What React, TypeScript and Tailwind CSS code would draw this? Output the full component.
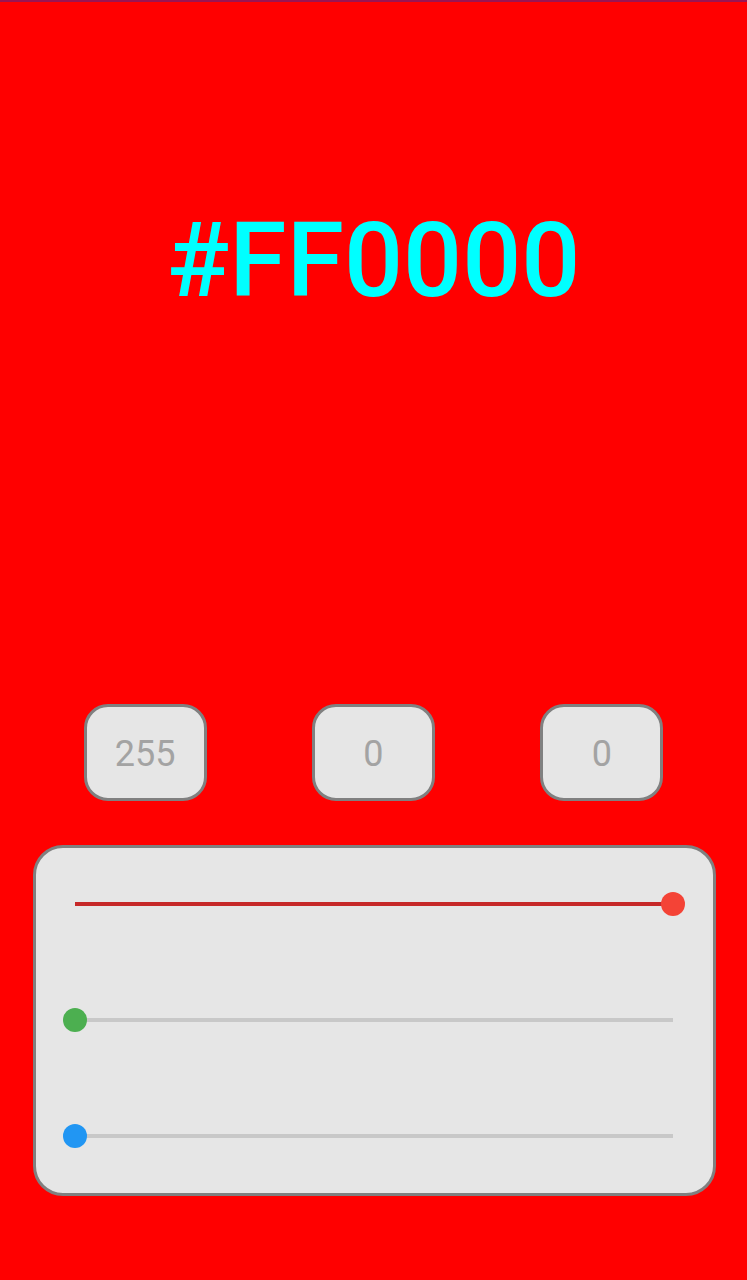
import React from 'react'

const channels = [
  { value: 255, track: 'bg-[#c62828]', thumb: 'bg-[#f44336]', pct: 100 },
  { value: 0, track: 'bg-[#c8c8c8]', thumb: 'bg-[#4caf50]', pct: 0 },
  { value: 0, track: 'bg-[#c8c8c8]', thumb: 'bg-[#2196f3]', pct: 0 },
]

function Slider({ track, thumb, pct }: { track: string; thumb: string; pct: number }) {
  return (
    <div className="relative h-6 flex items-center">
      <div className={`w-full h-[4px] ${pct > 0 ? track : 'bg-[#c8c8c8]'}`} />
      <div
        className={`absolute top-0 w-6 h-6 -ml-3 rounded-full ${thumb}`}
        style={{ left: `${pct}%` }}
      />
    </div>
  )
}

export default function App() {
  return (
    <div
      className="w-[747px] h-[1280px] bg-[#ff0000] flex flex-col overflow-hidden"
      style={{ fontFamily: 'Roboto, "Noto Sans", sans-serif' }}
    >
      {/* status bar edge */}
      <div className="h-[2px] bg-[#9b1552]" />

      {/* hex readout */}
      <h1 className="mt-[207px] text-center text-[104px] leading-none font-medium text-[#00ffff]">
        #FF0000
      </h1>

      {/* value boxes */}
      <div className="mt-[391px] mx-[31px] grid grid-cols-3">
        {channels.map((c, i) => (
          <div key={i} className="flex justify-center">
            <div className="w-[123px] h-[97px] rounded-[24px] border-[3px] border-[#808080] bg-[#e6e6e6] flex items-center justify-center pt-[3px]">
              <span className="text-[36px] text-[#a3a3a3]">{c.value}</span>
            </div>
          </div>
        ))}
      </div>

      {/* sliders */}
      <div className="mt-[44px] ml-[33px] mr-[31px] h-[351px] rounded-[30px] border-[3px] border-[#808080] bg-[#e6e6e6] pl-[39px] pr-[40px] pt-[44px] flex flex-col gap-[92px]">
        {channels.map((c, i) => (
          <Slider key={i} track={c.track} thumb={c.thumb} pct={c.pct} />
        ))}
      </div>
    </div>
  )
}
